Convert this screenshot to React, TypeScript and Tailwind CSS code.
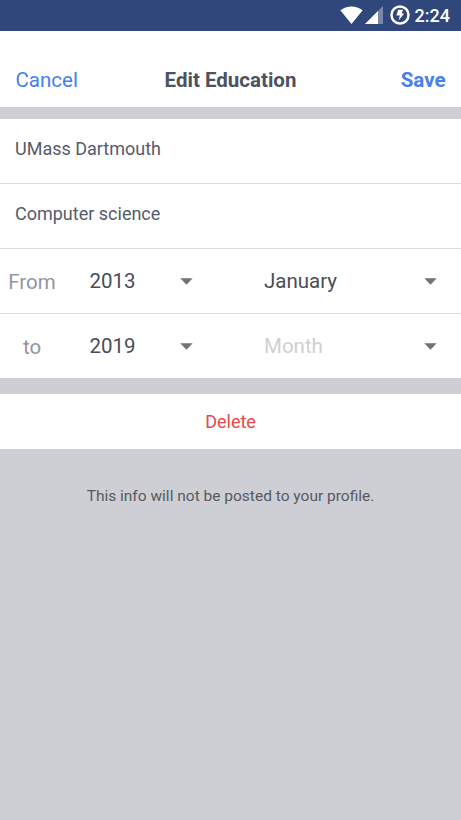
type DateRowProps = {
  label: string;
  year: string;
  month: string;
  placeholder?: boolean;
};

function Caret() {
  return (
    <svg width="13" height="7" viewBox="0 0 13 7" className="mb-px shrink-0">
      <path d="M0.3 0.3h12.4L6.5 6.7z" fill="#727272" />
    </svg>
  );
}

function StatusBar() {
  return (
    <div className="flex h-[30.5px] shrink-0 items-center justify-end bg-[#2f477a] pr-[11px] text-white">
      <svg width="23" height="18" viewBox="0 0 23 18">
        <path d="M0.3 4.2C6.8-0.9 16.2-0.9 22.7 4.2L11.5 18z" fill="#fff" />
      </svg>
      <svg width="18" height="18" viewBox="0 0 18 18" className="ml-[2px]">
        <path d="M18 0v18H0z" fill="#fff" fillOpacity="0.35" />
        <path d="M13 5v13H0z" fill="#fff" />
      </svg>
      <svg width="20" height="20" viewBox="0 0 20 20" className="ml-[7px]">
        <circle cx="10" cy="10" r="8.5" fill="none" stroke="#fff" strokeWidth="2.5" />
        <path d="M8.2 4.8h4.9l-1.5 3.7h2.6l-5.6 7 1.2-4.9H6.4z" fill="#fff" />
      </svg>
      <span className="ml-[5px] pt-[2px] text-[18px] font-medium leading-none">2:24</span>
    </div>
  );
}

function DateRow({ label, year, month, placeholder }: DateRowProps) {
  return (
    <div className="flex h-[65px] items-center text-[20.5px] last:h-16">
      <span className="w-16 pt-[2px] text-center text-[#92959d]">{label}</span>
      <div className="ml-[25.5px] flex w-[103.5px] items-center justify-between pt-px text-[#4a4d55]">
        <span>{year}</span>
        <Caret />
      </div>
      <div className="ml-[71px] flex w-[173px] items-center justify-between pt-px">
        <span className={placeholder ? 'text-[#cfcfd2]' : 'text-[#4a4d55]'}>{month}</span>
        <Caret />
      </div>
    </div>
  );
}

export default function App() {
  return (
    <div className="flex h-[820px] w-[461px] flex-col bg-[#cecfd4] font-[Roboto,sans-serif]">
      <StatusBar />
      <header className="grid h-[76.5px] grid-cols-[1fr_auto_1fr] items-center bg-white px-[15.5px] pt-6 text-[20.5px]">
        <button className="justify-self-start text-[#4680ee]">Cancel</button>
        <h1 className="font-bold text-[#4d5160]">Edit Education</h1>
        <button className="justify-self-end font-bold text-[#4680ee]">Save</button>
      </header>

      <section className="mt-3 divide-y divide-[#dedfe2] bg-white">
        <div className="flex h-[65px] items-center px-[15px] pb-[5px] text-[18px] text-[#565b69]">UMass Dartmouth</div>
        <div className="flex h-[65px] items-center px-[15px] pb-[5px] text-[18px] text-[#565b69]">Computer science</div>
        <DateRow label="From" year="2013" month="January" />
        <DateRow label="to" year="2019" month="Month" placeholder />
      </section>

      <button className="mt-4 h-[55px] bg-white text-[18px] text-[#e9484b]">Delete</button>
      <p className="mt-9 text-center text-[15.5px] text-[#565960]">This info will not be posted to your profile.</p>
    </div>
  );
}
